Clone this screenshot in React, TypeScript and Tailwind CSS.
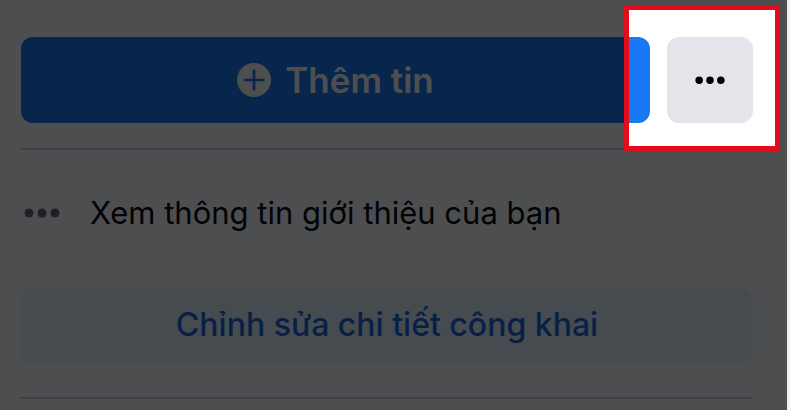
import type { ReactNode } from "react"

const Dots = ({ className }: { className: string }) => (
  <svg viewBox="0 0 36 10" fill="currentColor" aria-hidden="true" className={className}>
    <circle cx="5" cy="5" r="4.5" />
    <circle cx="18" cy="5" r="4.5" />
    <circle cx="31" cy="5" r="4.5" />
  </svg>
)

const PlusCircle = () => (
  <svg viewBox="0 0 34 34" aria-hidden="true" className="h-[34px] w-[34px] shrink-0">
    <circle cx="17" cy="17" r="17" fill="#fff" />
    <path d="M17 7.5v19M7.5 17h19" stroke="#1877f2" strokeWidth="2.6" strokeLinecap="round" />
  </svg>
)

// Dims everything on the page except the framed child
const Spotlight = ({ children }: { children: ReactNode }) => (
  <div className="relative shrink-0">
    {children}
    <div className="pointer-events-none absolute -top-8 -right-[27px] -bottom-7 -left-[43px] z-10 border-5 border-[#e60b1b] shadow-[0_0_0_2000px_rgba(2,3,5,0.7)]" />
  </div>
)

export default function App() {
  return (
    <div className="min-h-screen border-r-3 border-[#f0f0f0] bg-white font-['Inter','Liberation_Sans',sans-serif]">
      <main className="relative min-h-screen overflow-hidden pt-[37px] pr-[34px] pl-[21px]">
        <div className="flex gap-[17px]">
          <button
            type="button"
            className="flex h-[86px] flex-1 items-center justify-center gap-[14px] rounded-xl bg-[#1877f2] text-[35px] font-semibold text-white"
          >
            <PlusCircle />
            <span>Thêm tin</span>
          </button>
          <Spotlight>
            <button
              type="button"
              aria-label="Tùy chọn khác"
              className="flex h-[86px] w-[86px] items-center justify-center rounded-xl bg-[#e4e5ea] text-black"
            >
              <Dots className="w-[30px]" />
            </button>
          </Spotlight>
        </div>

        <hr className="mt-[25px] border-t-2 border-[#ced0d4]" />

        <a href="#about" className="mt-[39px] flex h-12 items-center gap-[30px] pl-[3px] text-[31px] text-[#050505]">
          <Dots className="w-9 text-[#65676b]" />
          <span>Xem thông tin giới thiệu của bạn</span>
        </a>

        <button
          type="button"
          className="mt-[50px] flex h-[76px] w-full items-center justify-center rounded-xl bg-[#e7f3ff] text-[32px] font-medium text-[#1866dc]"
        >
          Chỉnh sửa chi tiết công khai
        </button>

        <hr className="mt-[34px] border-t-2 border-[#ced0d4]" />
      </main>
    </div>
  )
}
